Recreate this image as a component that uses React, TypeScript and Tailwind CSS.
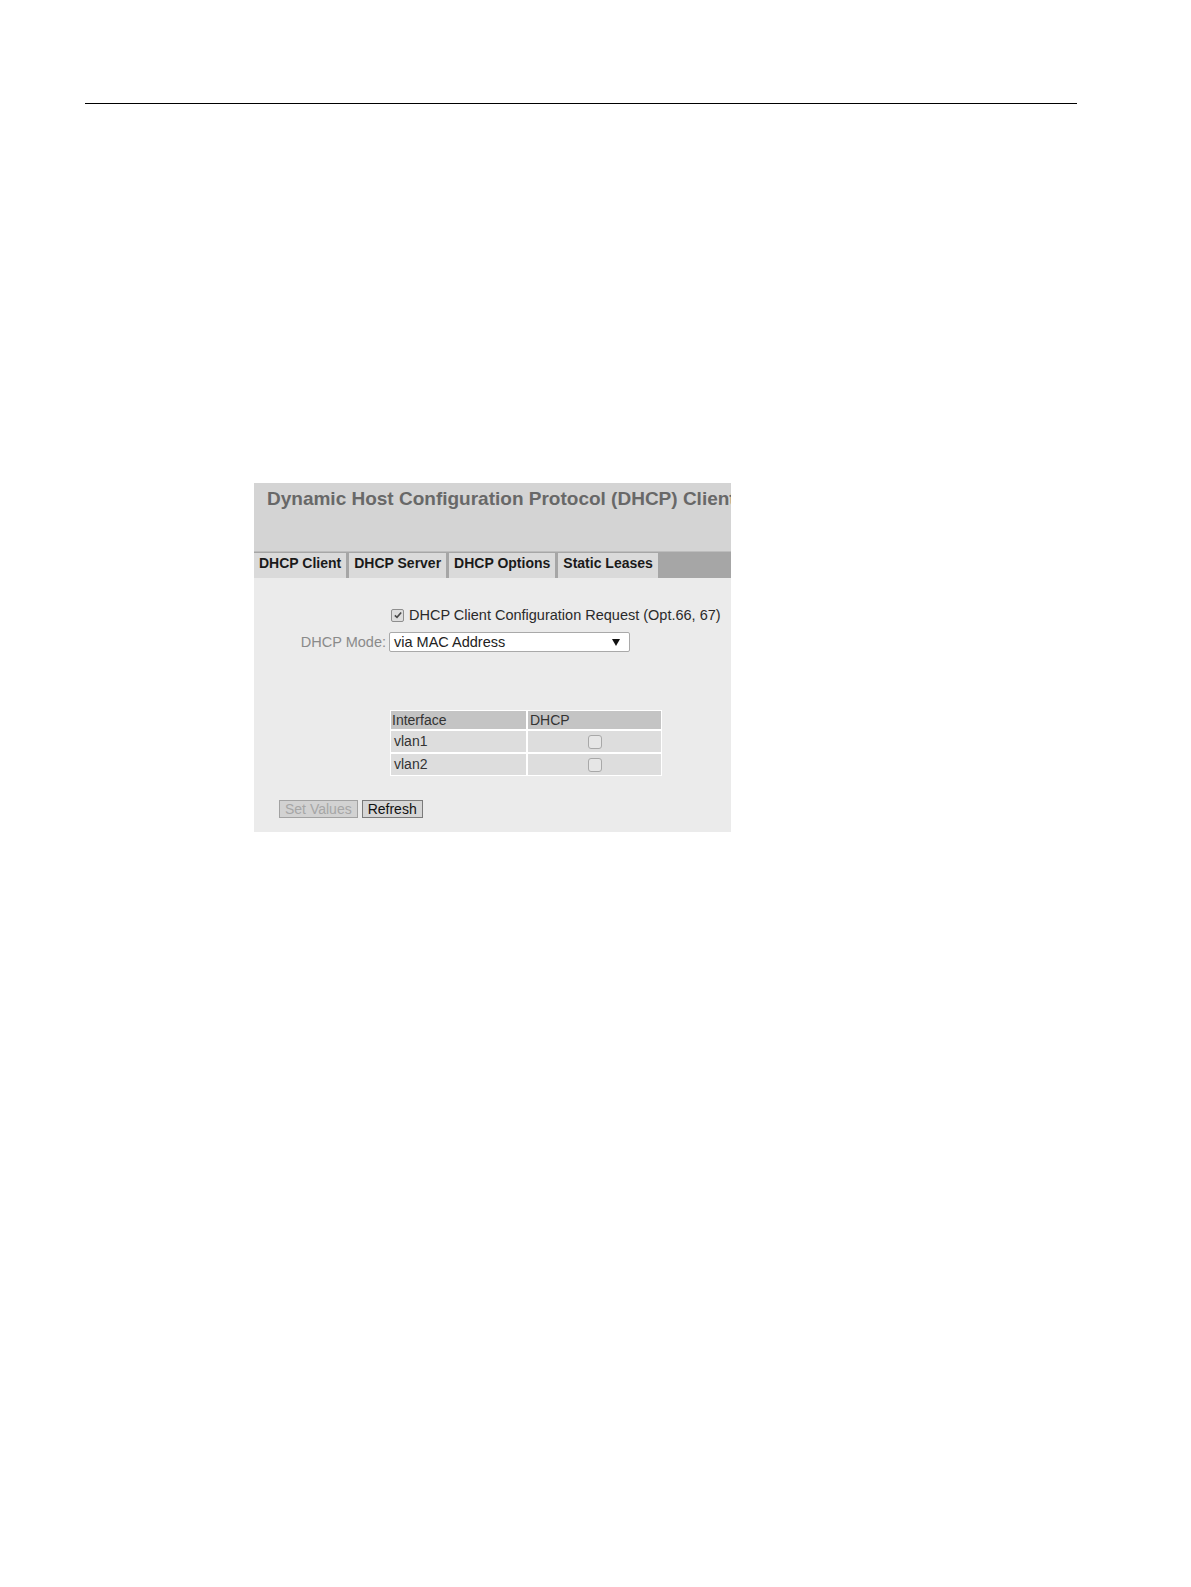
import React from 'react';

const font = "font-['Liberation_Sans',Arial,sans-serif]";

export default function App() {
  return (
    <div className={`min-h-[1587px] w-full bg-white ${font}`}>
      {/* Page rule */}
      <div className="pt-[103px] pl-[85px]">
        <div className="h-px w-[992px] bg-black" />
      </div>

      <div className="ml-[254px] mt-[379px] w-[477px]">
        <Header />
        <Tabs />
        <Content />
      </div>
    </div>
  );
}

/* ── Title bar ── */
const Header = () => (
  <div className="h-[68px] overflow-hidden bg-[#d4d4d4] pl-[13px] pt-[5px]">
    <h1 className="whitespace-nowrap text-[19px] font-bold leading-[21px] text-[#686868]">
      Dynamic Host Configuration Protocol (DHCP) Client
    </h1>
  </div>
);

/* ── Tab strip ── */
const Tabs = () => {
  const tabs = ['DHCP Client', 'DHCP Server', 'DHCP Options', 'Static Leases'];
  return (
    <div className="flex h-[27px] gap-[3px] border-t border-[#bdbdbd] bg-[#a6a6a6] pt-px">
      {tabs.map((t) => (
        <div
          key={t}
          className="h-[25px] bg-[#dadada] px-[5px] text-[14px] font-bold leading-[20px] text-[#1a1a1a]"
        >
          {t}
        </div>
      ))}
    </div>
  );
};

/* ── Form body ── */
const Content = () => (
  <div className="bg-[#ebebeb] pt-[27px] pb-[14px] text-[14px]">
    <div className="grid grid-cols-[132px_1fr] gap-x-[3px] text-[14.5px]">
      <div />
      <label className="flex h-[20px] items-center gap-[5px] leading-[20px] text-[#2a2a2a]">
        <span className="ml-[2px] flex h-[13px] w-[13px] items-center justify-center rounded-[2px] border border-[#8e8e8e] bg-[#dedede]">
          <svg viewBox="0 0 12 12" className="h-[10px] w-[10px]">
            <path d="M2.2 6.4 L4.8 8.8 L9.8 3" fill="none" stroke="#4a4a4a" strokeWidth="2" />
          </svg>
        </span>
        DHCP Client Configuration Request (Opt.66, 67)
      </label>

      <div className="mt-[7px] text-right leading-[20px] text-[#8a8a8a]">DHCP Mode:</div>
      <div className="mt-[7px] flex h-[20px] w-[241px] items-center justify-between rounded-[2px] border border-[#a9a9a9] bg-white pl-[4px] pr-[9px] leading-[18px] text-[#222]">
        <span>via MAC Address</span>
        <svg viewBox="0 0 8 7" className="h-[7px] w-[8px]">
          <path d="M0 0 H8 L4 7 Z" fill="#111" />
        </svg>
      </div>
    </div>

    {/* Interface table */}
    <div className="ml-[136px] mt-[58px] grid w-[272px] grid-cols-[135px_133px] gap-[2px] bg-white p-px leading-[18px] text-[#333]">
      <div className="h-[18px] bg-[#c4c4c4] pl-px">Interface</div>
      <div className="h-[18px] bg-[#c4c4c4] pl-[2px]">DHCP</div>
      {['vlan1', 'vlan2'].map((v) => (
        <React.Fragment key={v}>
          <div className="h-[21px] bg-[#dddddd] pl-[3px] leading-[21px]">{v}</div>
          <div className="flex h-[21px] items-center justify-center bg-[#dddddd]">
            <span className="h-[14px] w-[14px] rounded-[3px] border border-[#a8a8a8] bg-[#e6e6e6]" />
          </div>
        </React.Fragment>
      ))}
    </div>

    {/* Buttons */}
    <div className="mt-[24px] flex gap-[4px] pl-[25px]">
      <button className="h-[18px] border border-[#a2a2a2] bg-[#d2d2d2] px-[5px] text-[14px] leading-[16px] text-[#a6a6a6]">
        Set Values
      </button>
      <button className="h-[18px] border border-[#7a7a7a] bg-[#d6d6d6] px-[5px] text-[14px] leading-[16px] text-[#111]">
        Refresh
      </button>
    </div>
  </div>
);
